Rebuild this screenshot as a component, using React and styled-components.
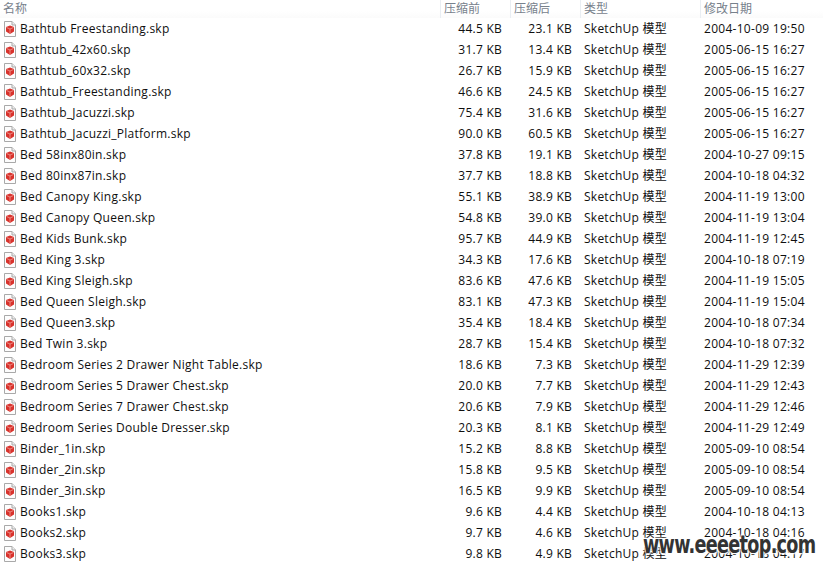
import React from "react";
import styled, { createGlobalStyle } from "styled-components";

const Global = createGlobalStyle`
  html, body { margin: 0; padding: 0; background: #fff; }
  body { width: 823px; height: 566px; overflow: hidden; }
`;

const Page = styled.div`
  position: relative;
  width: 823px;
  height: 566px;
  overflow: hidden;
  background: #fff;
  font-family: "Open Sans", "Noto Sans CJK SC", sans-serif;
  font-size: 12px;
  color: #0f0f0f;
`;

const Grid = `
  display: grid;
  grid-template-columns: 440px 70px 70px 120px 123px;
`;

const Header = styled.div`
  ${Grid}
  height: 18px;
  background: linear-gradient(#fff, #fff 60%, #fbfbfb);
`;

const HeadCell = styled.div`
  height: 18px;
  padding-left: ${p => p.$pad}px;
  border-left: ${p => (p.$first ? "none" : "1px solid #e9eef3")};
  box-sizing: border-box;
  font-size: 12px;
  line-height: 15px;
  color: #77818c;
  font-family: "Noto Sans CJK SC", sans-serif;
  white-space: nowrap;
`;

const Row = styled.div`
  ${Grid}
  height: 21px;
  align-items: center;
  line-height: 21px;
  white-space: nowrap;
`;

const NameCell = styled.div`
  display: flex;
  align-items: center;
  gap: 4px;
  padding-left: 4px;
  letter-spacing: 0.25px;
`;

const SizeCell = styled.div`
  text-align: right;
  padding-right: 8px;
  letter-spacing: 0.25px;
`;

const TypeCell = styled.div`
  padding-left: 4px;
  letter-spacing: 0.25px;
`;

const DateCell = styled.div`
  padding-left: 4px;
  letter-spacing: 0.28px;
`;

const Watermark = styled.div`
  position: absolute;
  left: 643px;
  top: 530px;
  font-family: "DejaVu Sans", sans-serif;
  font-weight: 700;
  font-size: 25px;
  line-height: 30px;
  letter-spacing: -1px;
  color: #333;
  transform-origin: left center;
  transform: scaleX(0.705);
  white-space: nowrap;
  text-shadow: 0 0 2px #fff, 0 0 2px #fff, 1px 1px 2px #fff, -1px -1px 2px #fff;
`;

const FileIcon = () => (
  <svg width="12" height="16" viewBox="0 0 12 16" style={{ flex: "none" }}>
    <path d="M.5.5H8L11.5 4V15.5H.5Z" fill="#fdfdfd" stroke="#a9a9a9" />
    <path d="M8 .5V4H11.5" fill="#eee" stroke="#a9a9a9" />
    <path d="M2 6 6 4.5 10 6V10.5L6 13 2 10.5Z" fill="#d8322c" />
    <path d="M2.5 6.5 6 8 9.5 6.5M6 8V12.5" fill="none" stroke="#f3b0a8" strokeWidth=".7" />
  </svg>
);

const files = [
  ["Bathtub Freestanding.skp", "44.5 KB", "23.1 KB", "2004-10-09 19:50"],
  ["Bathtub_42x60.skp", "31.7 KB", "13.4 KB", "2005-06-15 16:27"],
  ["Bathtub_60x32.skp", "26.7 KB", "15.9 KB", "2005-06-15 16:27"],
  ["Bathtub_Freestanding.skp", "46.6 KB", "24.5 KB", "2005-06-15 16:27"],
  ["Bathtub_Jacuzzi.skp", "75.4 KB", "31.6 KB", "2005-06-15 16:27"],
  ["Bathtub_Jacuzzi_Platform.skp", "90.0 KB", "60.5 KB", "2005-06-15 16:27"],
  ["Bed 58inx80in.skp", "37.8 KB", "19.1 KB", "2004-10-27 09:15"],
  ["Bed 80inx87in.skp", "37.7 KB", "18.8 KB", "2004-10-18 04:32"],
  ["Bed Canopy King.skp", "55.1 KB", "38.9 KB", "2004-11-19 13:00"],
  ["Bed Canopy Queen.skp", "54.8 KB", "39.0 KB", "2004-11-19 13:04"],
  ["Bed Kids Bunk.skp", "95.7 KB", "44.9 KB", "2004-11-19 12:45"],
  ["Bed King 3.skp", "34.3 KB", "17.6 KB", "2004-10-18 07:19"],
  ["Bed King Sleigh.skp", "83.6 KB", "47.6 KB", "2004-11-19 15:05"],
  ["Bed Queen Sleigh.skp", "83.1 KB", "47.3 KB", "2004-11-19 15:04"],
  ["Bed Queen3.skp", "35.4 KB", "18.4 KB", "2004-10-18 07:34"],
  ["Bed Twin 3.skp", "28.7 KB", "15.4 KB", "2004-10-18 07:32"],
  ["Bedroom Series 2 Drawer Night Table.skp", "18.6 KB", "7.3 KB", "2004-11-29 12:39"],
  ["Bedroom Series 5 Drawer Chest.skp", "20.0 KB", "7.7 KB", "2004-11-29 12:43"],
  ["Bedroom Series 7 Drawer Chest.skp", "20.6 KB", "7.9 KB", "2004-11-29 12:46"],
  ["Bedroom Series Double Dresser.skp", "20.3 KB", "8.1 KB", "2004-11-29 12:49"],
  ["Binder_1in.skp", "15.2 KB", "8.8 KB", "2005-09-10 08:54"],
  ["Binder_2in.skp", "15.8 KB", "9.5 KB", "2005-09-10 08:54"],
  ["Binder_3in.skp", "16.5 KB", "9.9 KB", "2005-09-10 08:54"],
  ["Books1.skp", "9.6 KB", "4.4 KB", "2004-10-18 04:13"],
  ["Books2.skp", "9.7 KB", "4.6 KB", "2004-10-18 04:16"],
  ["Books3.skp", "9.8 KB", "4.9 KB", "2004-10-18 04:17"],
];

export default function App() {
  return (
    <Page>
      <Global />
      <Header>
        <HeadCell $first $pad={3}>名称</HeadCell>
        <HeadCell $pad={3}>压缩前</HeadCell>
        <HeadCell $pad={3}>压缩后</HeadCell>
        <HeadCell $pad={3}>类型</HeadCell>
        <HeadCell $pad={3}>修改日期</HeadCell>
      </Header>
      {files.map(([name, before, after, date]) => (
        <Row key={name}>
          <NameCell><FileIcon />{name}</NameCell>
          <SizeCell>{before}</SizeCell>
          <SizeCell>{after}</SizeCell>
          <TypeCell>SketchUp 模型</TypeCell>
          <DateCell>{date}</DateCell>
        </Row>
      ))}
      <Watermark>www.eeeetop.com</Watermark>
    </Page>
  );
}
